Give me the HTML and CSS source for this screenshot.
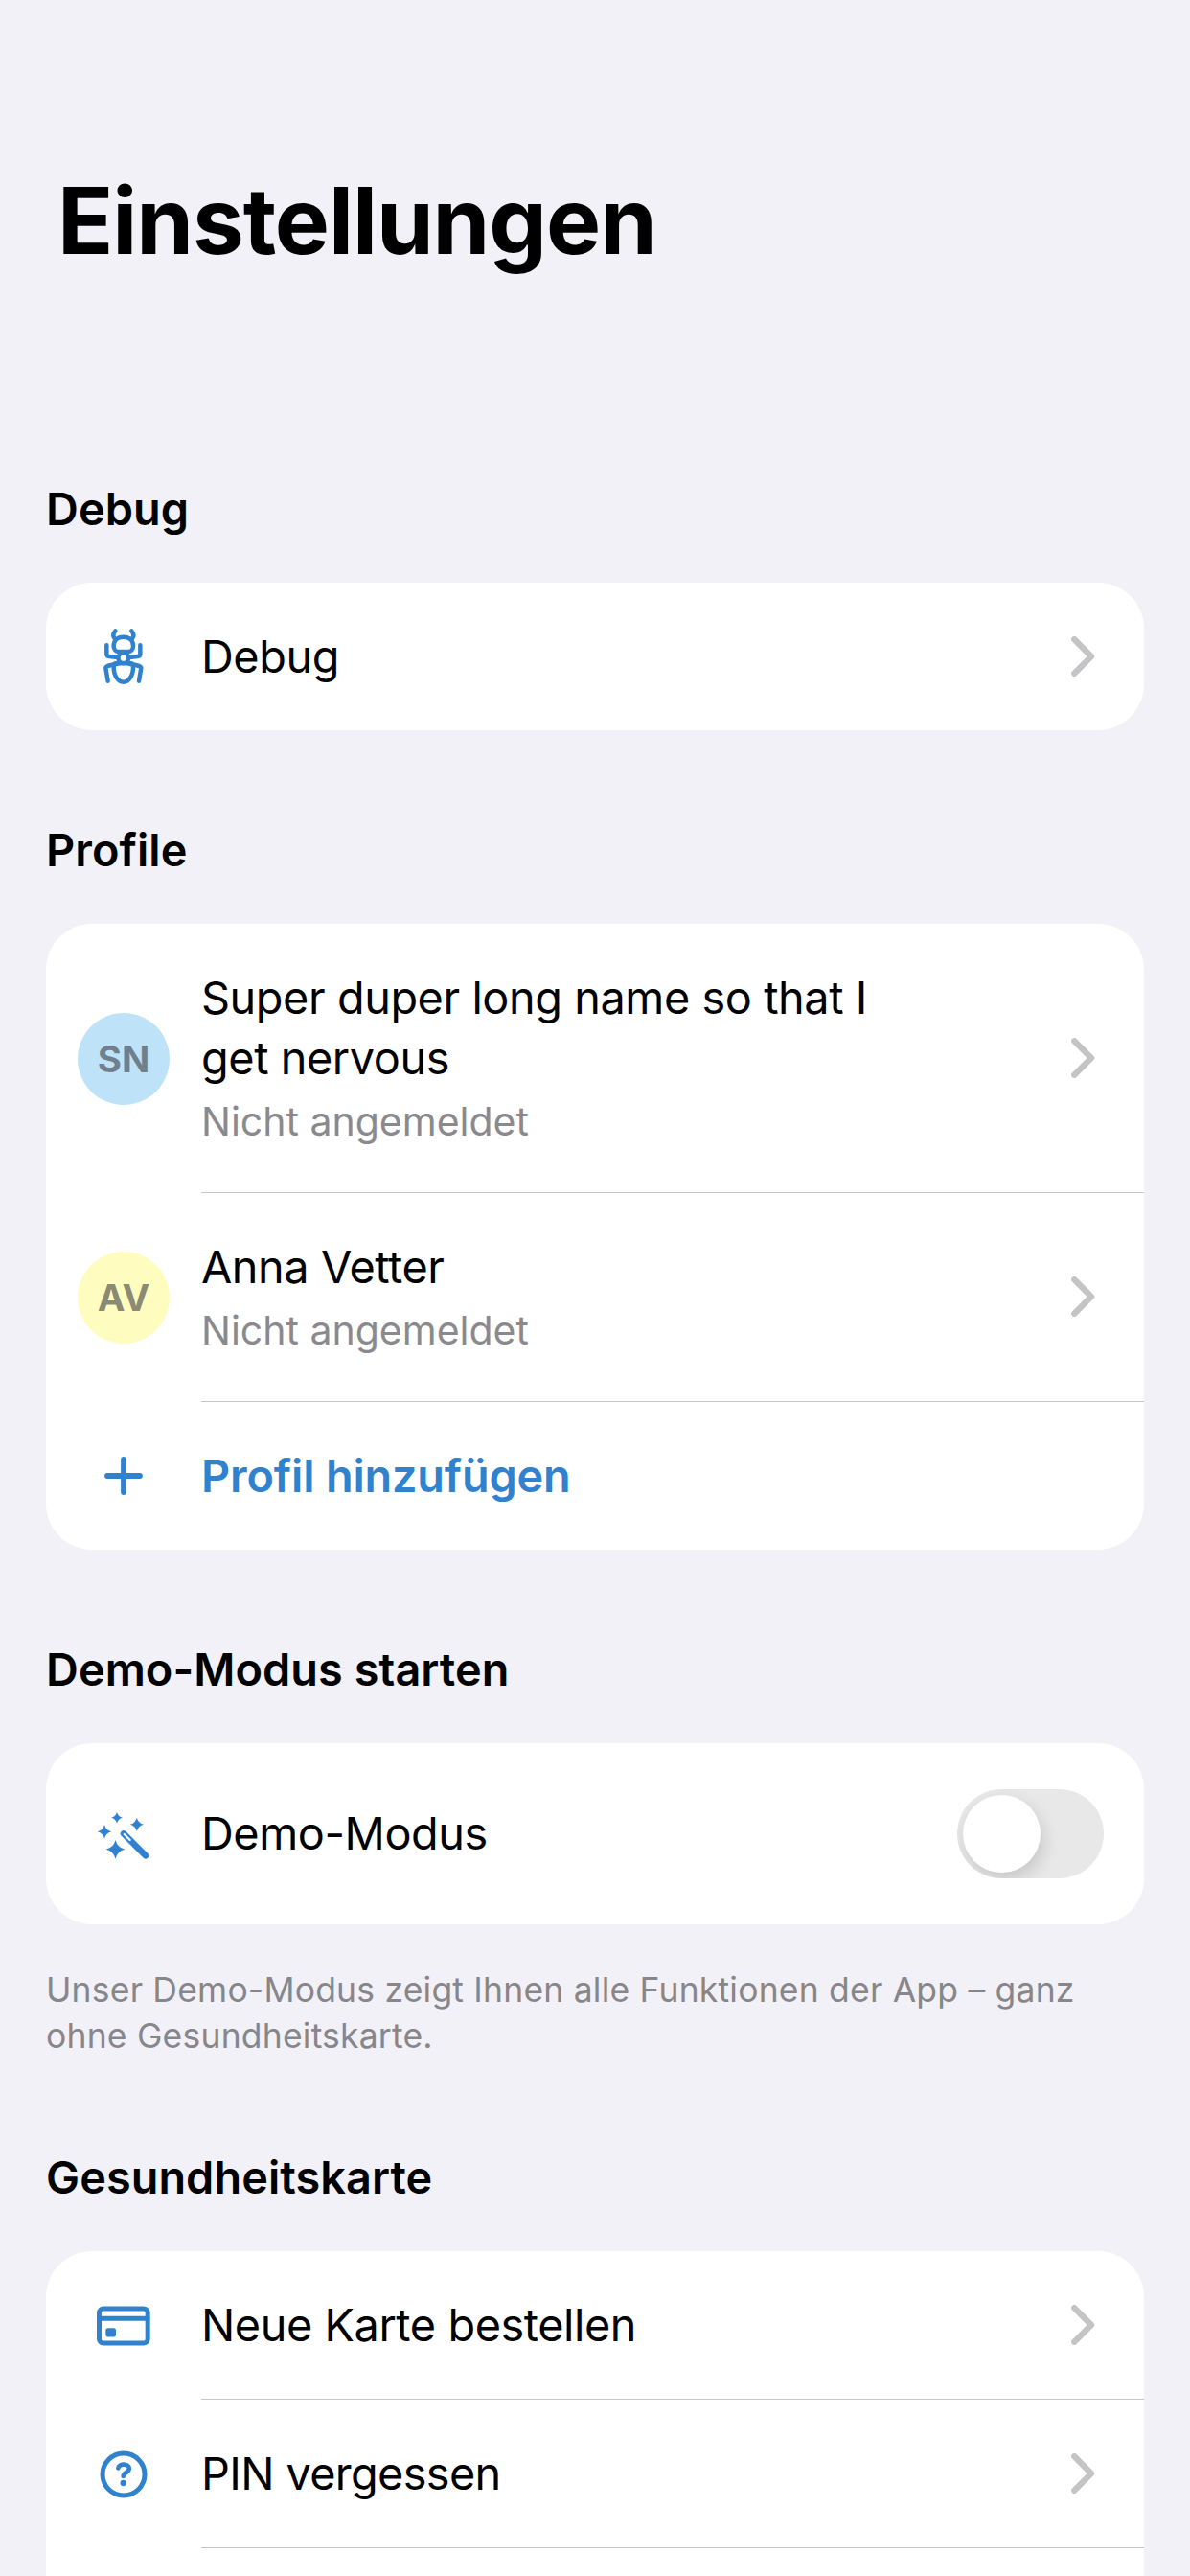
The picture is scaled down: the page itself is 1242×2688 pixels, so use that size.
FILE: index.html
```html
<!DOCTYPE html>
<html lang="de">
<head>
<meta charset="utf-8">
<meta name="viewport" content="width=device-width, initial-scale=1">
<title>Einstellungen</title>
<link rel="stylesheet" href="styles.css">
</head>
<body>
<svg class="defs" aria-hidden="true">
  <symbol id="chevron" viewBox="0 0 25 42"><path d="M3.3 3.3 21 21 3.3 38.7"/></symbol>
  <symbol id="star" viewBox="-1 -1 2 2"><path d="M0-1Q.2-.2 1 0Q.2.2 0 1Q-.2.2-1 0Q-.2-.2 0-1Z"/></symbol>
</svg>
<main class="screen">
  <h1 class="title">Einstellungen</h1>

  <section class="section">
    <h2 class="section-title">Debug</h2>
    <div class="card">
      <div class="row">
        <div class="lead">
          <svg class="icon line" width="48" height="60" viewBox="195 165 144 180" stroke-width="13.5">
            <path d="M241 175Q230 188 239 199M292 175Q303 188 294 199"/>
            <path d="M236 222C236 204 248 194 266.500 194S297 204 297 222C297 232 291 240 283 240H250C242 240 236 232 236 222Z"/>
            <circle cx="266.500" cy="260" r="16"/>
            <path d="M244 277H289Q297 277 297 288C297 317 282 335 266.500 335S236 317 236 288Q236 277 244 277Z"/>
            <path d="M214 220V247Q214 254 222 255L248 258M319 220V247Q319 254 311 255L285 258"/>
            <path d="M218 332 211.500 294Q210 288 217 285Q230 281 248 278M315 332 321.500 294Q323 288 316 285Q303 281 285 278"/>
          </svg>
        </div>
        <div class="content"><span class="label">Debug</span><svg class="chevron"><use href="#chevron"/></svg></div>
      </div>
    </div>
  </section>

  <section class="section">
    <h2 class="section-title">Profile</h2>
    <div class="card">
      <div class="row profile">
        <div class="lead"><span class="avatar blue">SN</span></div>
        <div class="content">
          <div class="person"><span class="label">Super duper long name so that I get nervous</span><span class="status">Nicht angemeldet</span></div>
          <svg class="chevron"><use href="#chevron"/></svg>
        </div>
      </div>
      <div class="row profile">
        <div class="lead"><span class="avatar yellow">AV</span></div>
        <div class="content">
          <div class="person"><span class="label">Anna Vetter</span><span class="status">Nicht angemeldet</span></div>
          <svg class="chevron"><use href="#chevron"/></svg>
        </div>
      </div>
      <div class="row">
        <div class="lead">
          <svg class="icon line" width="40" height="40" viewBox="0 0 40 40" stroke-width="5.800"><path d="M20 3V37M3 20H37"/></svg>
        </div>
        <div class="content"><span class="label action">Profil hinzufügen</span></div>
      </div>
    </div>
  </section>

  <section class="section">
    <h2 class="section-title">Demo-Modus starten</h2>
    <div class="card">
      <div class="row tall">
        <div class="lead">
          <svg class="icon" width="58" height="52" viewBox="180 562 174 156">
            <use href="#star" x="228" y="570" width="36" height="36"/>
            <use href="#star" x="287" y="588" width="43" height="43"/>
            <use href="#star" x="185" y="610" width="44" height="44"/>
            <use href="#star" x="212" y="658" width="59" height="59"/>
            <path class="wand" d="M267 638 336 707"/>
            <path class="wand-tip" d="M269 640 287 658"/>
          </svg>
        </div>
        <div class="content"><span class="label">Demo-Modus</span><span class="toggle" role="switch" aria-checked="false"><span class="knob"></span></span></div>
      </div>
    </div>
    <p class="note">Unser Demo-Modus zeigt Ihnen alle Funktionen der App – ganz ohne Gesundheitskarte.</p>
  </section>

  <section class="section last">
    <h2 class="section-title">Gesundheitskarte</h2>
    <div class="card open">
      <div class="row">
        <div class="lead">
          <svg class="icon line" width="58" height="42" viewBox="30 31.500 174 126" stroke-width="15">
            <rect x="40.500" y="40.500" width="152" height="108" rx="13"/>
            <path d="M41 71.500H192"/>
            <rect class="solid" x="61" y="101" width="32" height="28" rx="7"/>
          </svg>
        </div>
        <div class="content"><span class="label">Neue Karte bestellen</span><svg class="chevron"><use href="#chevron"/></svg></div>
      </div>
      <div class="row">
        <div class="lead">
          <svg class="icon line" width="50" height="50" viewBox="43 485 150 150" stroke-width="15">
            <circle cx="118" cy="560" r="66"/>
            <path stroke-width="14" d="M101 540C103 525 135 525 135.500 541C135.500 554 117.500 554 117 566"/>
            <circle class="solid" cx="117" cy="587" r="9.500"/>
          </svg>
        </div>
        <div class="content"><span class="label narrow">PIN vergessen</span><svg class="chevron"><use href="#chevron"/></svg></div>
      </div>
    </div>
  </section>
</main>
</body>
</html>
```
FILE: styles.css
```css
* {
  box-sizing: border-box;
  margin: 0;
  padding: 0;
}

body {
  background: #f2f1f7;
  color: #000;
  font-family: Inter, "Liberation Sans", sans-serif;
  font-size: 46.8px;
}

.defs {
  display: none;
}

.screen {
  display: flex;
  flex-direction: column;
  gap: 95px;
  height: 2688px;
  padding: 172px 48px 0;
  overflow: hidden;
}

.title {
  margin-bottom: 118px;
  padding-left: 12px;
  font-size: 96px;
  font-weight: 700;
  line-height: 116px;
  letter-spacing: -1.05px;
}

.section-title {
  margin-bottom: 47px;
  font-size: 46.8px;
  font-weight: 600;
  line-height: 60px;
  letter-spacing: 0.08px;
}

.card {
  overflow: hidden;
  border-radius: 48px;
  background: #fff;
}

.row {
  display: grid;
  grid-template-columns: 162px 1fr;
  min-height: 154px;
}

.row.tall {
  min-height: 189px;
}

.row.tall .content {
  padding-right: 42px;
}

.lead {
  display: flex;
  align-items: center;
  justify-content: center;
}

.content {
  display: flex;
  align-items: center;
  justify-content: space-between;
  padding-right: 51px;
}

.row:not(:last-child),
.card.open .row {
  min-height: 155px;
}

.row:not(:last-child) .content,
.card.open .content {
  border-bottom: 1px solid #c6c6c8;
}

.profile .content {
  padding-top: 46px;
  padding-bottom: 47px;
}

.person {
  display: flex;
  flex-direction: column;
  gap: 7px;
  max-width: 740px;
}

.label {
  line-height: 63px;
  letter-spacing: -0.42px;
}

.label.narrow {
  letter-spacing: -0.62px;
}

.label.action {
  color: #3182ce;
  font-weight: 600;
  letter-spacing: -0.15px;
}

.status {
  color: #8a8a8e;
  font-size: 41px;
  line-height: 54px;
}

.avatar {
  width: 96px;
  height: 96px;
  border-radius: 50%;
  color: rgba(60, 60, 67, 0.6);
  font-size: 38.5px;
  font-weight: 700;
  line-height: 96px;
  text-align: center;
}

.avatar.blue {
  background: #bee3f8;
}

.avatar.yellow {
  background: #fefcbf;
}

.icon {
  fill: #3182ce;
}

.icon.line {
  fill: none;
  stroke: #3182ce;
  stroke-linecap: round;
  stroke-linejoin: round;
}

.icon .solid {
  fill: #3182ce;
  stroke: none;
}

.wand,
.wand-tip {
  fill: none;
  stroke: #3182ce;
  stroke-linecap: round;
  stroke-width: 19.5;
}

.wand-tip {
  stroke: #fff;
  stroke-width: 6.5;
}

.chevron {
  flex: none;
  width: 25px;
  height: 42px;
  fill: none;
  stroke: #c4c4c6;
  stroke-linecap: round;
  stroke-linejoin: round;
  stroke-width: 6.4;
}

.toggle {
  flex: none;
  width: 153px;
  height: 93px;
  padding: 6px;
  overflow: hidden;
  border-radius: 47px;
  background: #e8e8e8;
}

.knob {
  display: block;
  width: 81px;
  height: 81px;
  border-radius: 50%;
  background: #fff;
  box-shadow: 3px 8px 18px rgba(0, 0, 0, 0.14);
}

.note {
  margin: 45px 0 -2px;
  color: #86868b;
  font-size: 35.5px;
  line-height: 48px;
  letter-spacing: 0.2px;
}

.section.last {
  display: flex;
  flex: 1;
  flex-direction: column;
}

.card.open {
  flex: 1;
  border-radius: 48px 48px 0 0;
}
```
